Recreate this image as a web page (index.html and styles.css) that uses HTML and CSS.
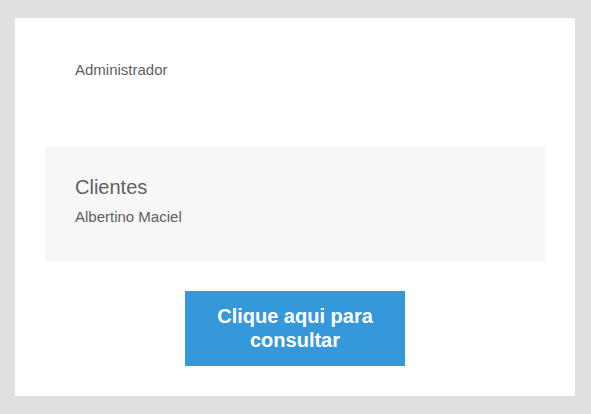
FILE: index.html
```html
<!DOCTYPE html>
<html lang="pt">
    <head>
        <meta charset="utf-8"/>
        <title>Consulta</title>
        <link rel="stylesheet" href="styles.css">
    </head>
    <body>
        <div class="card">
            <div class="header">Administrador</div>
            <div class="box">
                <div class="box-title">Clientes</div>
                <div class="box-name">Albertino Maciel</div>
            </div>
            <div class="actions">
                <a class="btn" href="#">Clique aqui para consultar</a>
            </div>
        </div>
    </body>
</html>
```

FILE: styles.css
```css
body {
    margin: 0;
    padding: 18px 16px 18px 15px;
    background: #e0e0e0;
    font-family: "Liberation Sans", Arial, sans-serif;
    color: #606060;
}

.card {
    width: 500px;
    padding: 30px;
    background: #ffffff;
}

.header {
    height: 86px;
    padding: 13px 30px 0 30px;
    font-size: 15px;
    line-height: 17px;
}

.box {
    background: #f7f7f7;
    padding: 29px 30px 0 30px;
    height: 85px;
}

.box-title {
    font-size: 20px;
    line-height: 23px;
}

.box-name {
    margin-top: 9px;
    font-size: 15px;
    line-height: 17px;
}

.actions {
    display: flex;
    justify-content: center;
    margin-top: 30px;
}

.btn {
    display: block;
    box-sizing: border-box;
    width: 220px;
    height: 75px;
    padding: 13px 20px;
    background: #3498db;
    color: #ffffff;
    font-size: 20px;
    font-weight: bold;
    line-height: 24px;
    text-align: center;
    text-decoration: none;
}
```
